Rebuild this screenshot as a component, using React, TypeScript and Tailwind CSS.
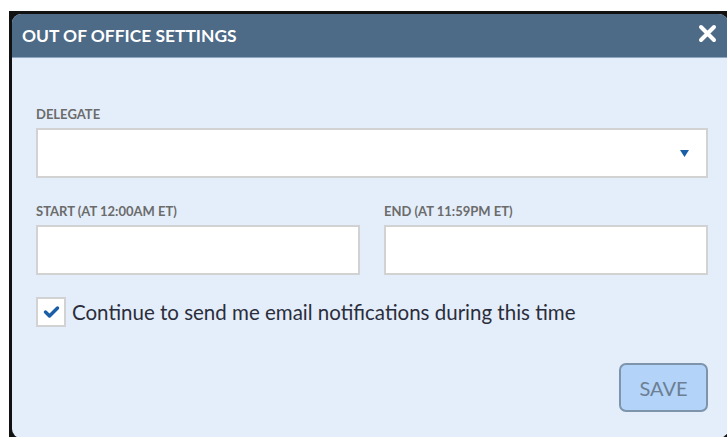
import React from "react";

const font = { fontFamily: "Lato, 'Open Sans', sans-serif" };

function Field({ label, className = "", children }: { label: string; className?: string; children?: React.ReactNode }) {
  return (
    <div className={className}>
      <div className="text-[13px] leading-[15px] font-bold text-[#6b6b6b]">{label}</div>
      <div className="mt-[6px] h-[50px] bg-white border-2 border-[#d2d2d2] flex items-center justify-end pr-[17px]">
        {children}
      </div>
    </div>
  );
}

export default function App() {
  return (
    <div className="w-[727px] h-[437px] bg-white overflow-hidden" style={font}>
      <div className="pt-[11px] pl-[9px]">
        <div className="bg-[#111] pt-[3px] pl-[3px] h-[426px]">
          <div className="w-[716px] h-[424px] rounded-[9px] bg-[#e4eefa] overflow-hidden flex flex-col">
            <div className="h-[44px] bg-[#4d6a87] border-b border-[#8ea6bf] flex items-center justify-between pl-[10px] pr-[11px]">
              <span className="text-white font-bold text-[17.4px] leading-[20px]">OUT OF OFFICE SETTINGS</span>
              <svg width="19" height="19" viewBox="0 0 19 19" className="mb-[4px]">
                <path d="M3 3 L16 16 M16 3 L3 16" stroke="white" strokeWidth="4" strokeLinecap="round" />
              </svg>
            </div>
            <div className="flex-1 pl-[24px] pr-[20px] pt-[49px] flex flex-col">
              <Field label="DELEGATE">
                <svg width="9" height="7" viewBox="0 0 9 7">
                  <path d="M0 0 H9 L4.5 7 Z" fill="#1a5ea6" />
                </svg>
              </Field>
              <div className="mt-[26px] flex gap-[24px]">
                <Field label="START (AT 12:00AM ET)" className="flex-1" />
                <Field label="END (AT 11:59PM ET)" className="flex-1" />
              </div>
              <div className="mt-[22px] flex items-center gap-[6px]">
                <div className="w-[30px] h-[30px] bg-white border-2 border-[#d2d2d2] flex items-center justify-center">
                  <svg width="17" height="14" viewBox="0 0 17 14">
                    <path d="M2.5 7 L6.5 11 L14.5 3" fill="none" stroke="#1a5ea6" strokeWidth="3.4" strokeLinecap="round" strokeLinejoin="round" />
                  </svg>
                </div>
                <span className="text-[20.5px] leading-[24px] text-[#2b2d3a]">Continue to send me email notifications during this time</span>
              </div>
              <div className="mt-[36px] flex justify-end">
                <button className="w-[89px] h-[49px] rounded-[7px] bg-[#b3d3f8] border-2 border-[#7d94ab] text-[20px] text-[#6c7f93]">
                  SAVE
                </button>
              </div>
            </div>
          </div>
        </div>
      </div>
    </div>
  );
}
